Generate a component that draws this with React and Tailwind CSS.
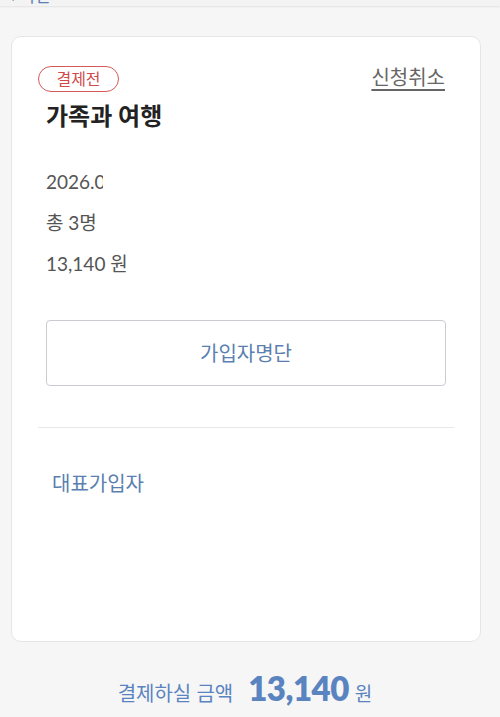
export default function App() {
  const font = { fontFamily: "Lato, 'Noto Sans CJK KR', sans-serif" };
  return (
    <div className="min-h-[717px] w-[500px] bg-[#f6f6f6] overflow-hidden" style={font}>
      {/* header, mostly scrolled off */}
      <div className="h-[6px] overflow-hidden bg-[#f3f3f3] shadow-[0_1px_2px_rgba(0,0,0,0.08)]">
        <div className="-mt-[14px] pl-[10px] text-[17px] leading-[20px] text-[#5b80b5]">‹ 이전</div>
      </div>

      <div className="ml-[11px] mr-[19px] mt-[30px] h-[606px] rounded-[10px] border border-[#e6e6e6] bg-white">
        <div className="flex items-start justify-between pl-[26px] pr-[35px] pt-[29px]">
          <span className="flex h-[26px] w-[81px] items-center justify-center rounded-full border border-[#d45a5a] text-[16px] text-[#d04a4a]">
            결제전
          </span>
          <span className="mt-[-3px] text-[20px] leading-[28px] text-[#666] underline underline-offset-[4px]">
            신청취소
          </span>
        </div>
        <div className="px-[34px]">
          <h1 className="mt-[8px] text-[24px] font-bold leading-[32px] text-[#222]">가족과 여행</h1>

          <div className="mt-[37px] flex flex-col gap-[16px] text-[19px] leading-[25px] text-[#555]">
            <div className="w-[57px] overflow-hidden whitespace-nowrap">2026.01.15 ~ 2026.01.20</div>
            <div>총 3명</div>
            <div>13,140 원</div>
          </div>

          <button className="mt-[44px] flex h-[66px] w-full items-center justify-center rounded-[4px] border border-[#c9cdd2] text-[20px] text-[#5a7fb0]">
            가입자명단
          </button>
        </div>

        <div className="mx-[26px] mt-[41px] h-px bg-[#e8e8e8]" />

        <div className="mt-[41px] pl-[40px] text-[20px] leading-[28px] text-[#5a7fb0]">대표가입자</div>
      </div>

      <div className="mt-[22px] flex items-baseline justify-center gap-[15px] pr-[10px] text-[#5a84c0]">
        <span className="text-[20px]">결제하실 금액</span>
        <span className="flex items-baseline gap-[6px]">
          <span className="text-[33px] font-extrabold tracking-[-0.5px]">13,140</span>
          <span className="text-[19px]">원</span>
        </span>
      </div>
    </div>
  );
}
